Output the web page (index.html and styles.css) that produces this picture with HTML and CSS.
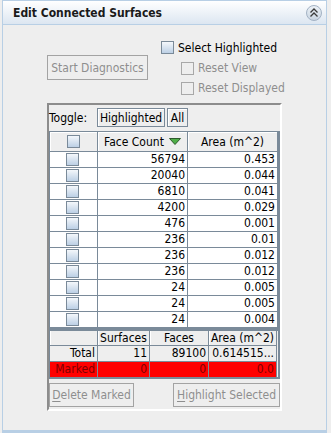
FILE: index.html
```html
<!DOCTYPE html>
<html>
<head>
<meta charset="utf-8">
<link rel="stylesheet" href="styles.css">
</head>
<body>
<div class="panel">
  <div class="hdr">
    <span class="title">Edit Connected Surfaces</span>
    <span class="collapse">
      <svg width="16" height="16" viewBox="0 0 16 16">
        <circle cx="8" cy="8" r="7.5" fill="url(#cg)" stroke="#a3b2c4"/>
        <defs><linearGradient id="cg" x1="0" y1="0" x2="0" y2="1"><stop offset="0" stop-color="#edf2f7"/><stop offset="1" stop-color="#c8d4e1"/></linearGradient></defs>
        <polyline points="4.5,7.5 8,4 11.5,7.5" fill="none" stroke="#3a3a3a" stroke-width="1.3"/>
        <polyline points="4.5,11.5 8,8 11.5,11.5" fill="none" stroke="#3a3a3a" stroke-width="1.3"/>
      </svg>
    </span>
  </div>
  <div class="body">
    <div class="top">
      <div class="btn dis start">Start Diagnostics</div>
      <div class="checks">
        <div class="chk first"><span class="cb"></span><span>Select Highlighted</span></div>
        <div class="chk sub dis"><span class="cb"></span><span>Reset View</span></div>
        <div class="chk sub dis"><span class="cb"></span><span>Reset Displayed</span></div>
      </div>
    </div>
    <div class="group">
      <div class="toggle">
        <span class="tlabel">Toggle:</span>
        <span class="tbtn hl">Highlighted</span>
        <span class="tbtn all">All</span>
      </div>
      <div class="tbl">
        <div class="thead">
          <div class="th"><span class="cb"></span></div>
          <div class="th"><span>Face Count</span>
            <svg class="sort" width="12" height="7" viewBox="0 0 12 7"><polygon points="0.5,0.5 11.5,0.5 6,6.5" fill="#4fae47" stroke="#2f5a2c"/></svg>
          </div>
          <div class="th">Area (m^2)</div>
        </div>
        <div class="tr"><div class="td c"><span class="cb"></span></div><div class="td">56794</div><div class="td">0.453</div></div>
        <div class="tr"><div class="td c"><span class="cb"></span></div><div class="td">20040</div><div class="td">0.044</div></div>
        <div class="tr"><div class="td c"><span class="cb"></span></div><div class="td">6810</div><div class="td">0.041</div></div>
        <div class="tr"><div class="td c"><span class="cb"></span></div><div class="td">4200</div><div class="td">0.029</div></div>
        <div class="tr"><div class="td c"><span class="cb"></span></div><div class="td">476</div><div class="td">0.001</div></div>
        <div class="tr"><div class="td c"><span class="cb"></span></div><div class="td">236</div><div class="td">0.01</div></div>
        <div class="tr"><div class="td c"><span class="cb"></span></div><div class="td">236</div><div class="td">0.012</div></div>
        <div class="tr"><div class="td c"><span class="cb"></span></div><div class="td">236</div><div class="td">0.012</div></div>
        <div class="tr"><div class="td c"><span class="cb"></span></div><div class="td">24</div><div class="td">0.005</div></div>
        <div class="tr"><div class="td c"><span class="cb"></span></div><div class="td">24</div><div class="td">0.005</div></div>
        <div class="tr"><div class="td c"><span class="cb"></span></div><div class="td">24</div><div class="td">0.004</div></div>
      </div>
      <div class="sum">
        <div class="sr shead"><div class="sc"></div><div class="sc">Surfaces</div><div class="sc">Faces</div><div class="sc">Area (m^2)</div></div>
        <div class="sr stotal"><div class="sc">Total</div><div class="sc">11</div><div class="sc">89100</div><div class="sc">0.614515...</div></div>
        <div class="sr smarked"><div class="sc">Marked</div><div class="sc">0</div><div class="sc">0</div><div class="sc">0.0</div></div>
      </div>
      <div class="actions">
        <div class="btn dis del"><span><u>D</u>elete Marked</span></div>
        <div class="btn dis hls"><span><u>H</u>ighlight Selected</span></div>
      </div>
    </div>
  </div>
</div>
</body>
</html>
```
FILE: styles.css
```css
* { box-sizing: border-box; margin: 0; padding: 0; }
html, body { background: #eeeeee; }
body {
  width: 331px;
  height: 433px;
  overflow: hidden;
  font-family: "DejaVu Sans Condensed", "DejaVu Sans", sans-serif;
  font-size: 12px;
  color: #000;
}
.panel {
  margin-left: 2px;
  width: 325px;
  height: 433px;
  border: 1px solid #b8cfe5;
  border-bottom-width: 3px;
  background: #eeeeee;
  display: flex;
  flex-direction: column;
}
.hdr {
  height: 24px;
  flex: none;
  border-bottom: 1px solid #b8cfe5;
  background: linear-gradient(#ffffff, #dce6f1);
  display: flex;
  align-items: center;
  justify-content: space-between;
  padding: 0 4px 0 10px;
}
.title { font-weight: bold; font-size: 12px; color: #1a1a1a; }
.collapse { width: 16px; height: 16px; display: block; margin-top: 1px; }
.collapse svg { display: block; }

.body { padding: 12px 44px 0 44px; }
.top { display: flex; align-items: center; gap: 13px; height: 61px; }
.btn {
  display: flex;
  align-items: center;
  justify-content: center;
  border: 1px solid #7a8a99;
  background: #eeeeee;
  height: 25px;
  white-space: nowrap;
}
.btn.dis { border-color: #a3a3a3; color: #8e8e8e; }
.start { width: 101px; flex: none; }
.checks { display: flex; flex-direction: column; flex: none; }
.chk { display: flex; align-items: center; gap: 4px; height: 20px; white-space: nowrap; }
.chk.first { height: 21px; }
.chk.sub { padding-left: 20px; }
.chk.dis { color: #8e8e8e; }
.cb {
  display: block;
  width: 13px;
  height: 13px;
  border: 1px solid #7a8a99;
  background: linear-gradient(#f4f7fb, #bcd0e5);
  flex: none;
}
.chk.dis .cb { border-color: #a8a8a8; background: #eeeeee; }

.group {
  margin-top: 5px;
  width: 235px;
  height: 308px;
  border: 2px solid;
  border-color: #8c8c8c #ffffff #ffffff #8c8c8c;
  display: flex;
  flex-direction: column;
}
.toggle { display: flex; align-items: center; height: 19px; margin: 3px 0 4px 0; }
.tlabel { width: 48px; }
.tbtn {
  display: flex;
  align-items: center;
  justify-content: center;
  height: 19px;
  border: 1px solid #7a8a99;
  box-shadow: inset 1px 1px 0 #ffffff;
  background: #eeeeee;
}
.tbtn.hl { width: 68px; }
.tbtn.all { width: 21px; margin-left: 2px; }

.tbl {
  border: 1px solid #7a8a99;
  border-right-width: 2px;
  background: #ffffff;
}
.thead, .tr { display: grid; grid-template-columns: 48px 90px 90px; }
.th {
  height: 20px;
  background: #eeeeee;
  border-right: 1px solid #7a8a99;
  border-bottom: 1px solid #7a8a99;
  box-shadow: inset 1px 1px 0 #ffffff;
  display: flex;
  align-items: center;
  justify-content: center;
  gap: 5px;
}
.sort { display: block; }
.td {
  height: 16px;
  border-right: 1px solid #7a8a99;
  border-bottom: 1px solid #7a8a99;
  text-align: right;
  padding-right: 2px;
  line-height: 15px;
  white-space: nowrap;
}
.td.c { display: flex; align-items: center; justify-content: center; }

.sum {
  border: 1px solid #7a8a99;
  border-width: 2px 2px 2px 1px;
  background: #eeeeee;
}
.sr { display: grid; grid-template-columns: 48px 52px 59px 68px; }
.sc {
  height: 15px;
  border-right: 1px solid #7a8a99;
  border-bottom: 1px solid #7a8a99;
  line-height: 14px;
  text-align: right;
  padding-right: 2px;
  white-space: nowrap;
  overflow: hidden;
}
.stotal .sc { height: 16px; line-height: 15px; }
.shead .sc { text-align: center; padding-right: 0; box-shadow: inset 1px 0 0 #ffffff; }
.smarked .sc { background: #ff0000; color: #7d0000; border-bottom: none; height: 15px; }

.actions { display: flex; justify-content: space-between; margin-top: 4px; }
.actions .btn { height: 24px; }
.del { width: 85px; }
.hls { width: 107px; }
u { text-decoration: underline; text-underline-offset: 2px; }
```
